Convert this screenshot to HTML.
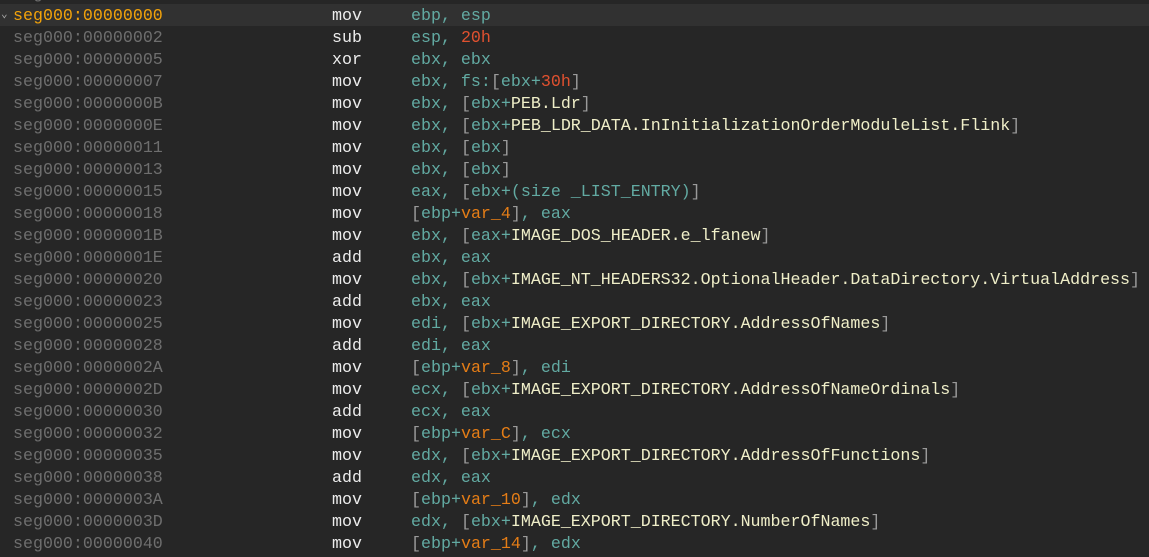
<!DOCTYPE html><html><head><style>
body{margin:0;width:1149px;height:557px;background:#262626;overflow:hidden;font-family:"Liberation Mono",monospace;font-size:16.65px}
.r{position:absolute;left:0;width:1149px;height:22px;line-height:23px;white-space:pre}
.a{position:absolute;left:13px;color:#6e6e6e}
.m{position:absolute;left:332px;color:#ececec}
.o{position:absolute;left:411px;color:#62aaa2}
.b{color:#9a9a9a}.n{color:#e0512f}.v{color:#e57d16}.i{color:#efeec8}.p{color:#cfcfcf}
</style></head><body>
<div class="r" style="top:-18px"><span class="a">seg000:00000000</span></div>
<div class="r" style="top:4px;background:#313131"><span style="position:absolute;left:1px;color:#aaa;font-size:11px">&#x2304;</span><span class="a" style="color:#f2a20a">seg000:00000000</span><span class="m">mov</span><span class="o">ebp, esp</span></div>
<div class="r" style="top:26px"><span class="a">seg000:00000002</span><span class="m">sub</span><span class="o">esp, <span class="n">20h</span></span></div>
<div class="r" style="top:48px"><span class="a">seg000:00000005</span><span class="m">xor</span><span class="o">ebx, ebx</span></div>
<div class="r" style="top:70px"><span class="a">seg000:00000007</span><span class="m">mov</span><span class="o">ebx, fs:<span class="b">[</span>ebx+<span class="n">30h</span><span class="b">]</span></span></div>
<div class="r" style="top:92px"><span class="a">seg000:0000000B</span><span class="m">mov</span><span class="o">ebx, <span class="b">[</span>ebx+<span class="i">PEB.Ldr</span><span class="b">]</span></span></div>
<div class="r" style="top:114px"><span class="a">seg000:0000000E</span><span class="m">mov</span><span class="o">ebx, <span class="b">[</span>ebx+<span class="i">PEB_LDR_DATA.InInitializationOrderModuleList.Flink</span><span class="b">]</span></span></div>
<div class="r" style="top:136px"><span class="a">seg000:00000011</span><span class="m">mov</span><span class="o">ebx, <span class="b">[</span>ebx<span class="b">]</span></span></div>
<div class="r" style="top:158px"><span class="a">seg000:00000013</span><span class="m">mov</span><span class="o">ebx, <span class="b">[</span>ebx<span class="b">]</span></span></div>
<div class="r" style="top:180px"><span class="a">seg000:00000015</span><span class="m">mov</span><span class="o">eax, <span class="b">[</span>ebx+(size _LIST_ENTRY)<span class="b">]</span></span></div>
<div class="r" style="top:202px"><span class="a">seg000:00000018</span><span class="m">mov</span><span class="o"><span class="b">[</span>ebp+<span class="v">var_4</span><span class="b">]</span>, eax</span></div>
<div class="r" style="top:224px"><span class="a">seg000:0000001B</span><span class="m">mov</span><span class="o">ebx, <span class="b">[</span>eax+<span class="i">IMAGE_DOS_HEADER.e_lfanew</span><span class="b">]</span></span></div>
<div class="r" style="top:246px"><span class="a">seg000:0000001E</span><span class="m">add</span><span class="o">ebx, eax</span></div>
<div class="r" style="top:268px"><span class="a">seg000:00000020</span><span class="m">mov</span><span class="o">ebx, <span class="b">[</span>ebx+<span class="i">IMAGE_NT_HEADERS32.OptionalHeader.DataDirectory.VirtualAddress</span><span class="b">]</span></span></div>
<div class="r" style="top:290px"><span class="a">seg000:00000023</span><span class="m">add</span><span class="o">ebx, eax</span></div>
<div class="r" style="top:312px"><span class="a">seg000:00000025</span><span class="m">mov</span><span class="o">edi, <span class="b">[</span>ebx+<span class="i">IMAGE_EXPORT_DIRECTORY.AddressOfNames</span><span class="b">]</span></span></div>
<div class="r" style="top:334px"><span class="a">seg000:00000028</span><span class="m">add</span><span class="o">edi, eax</span></div>
<div class="r" style="top:356px"><span class="a">seg000:0000002A</span><span class="m">mov</span><span class="o"><span class="b">[</span>ebp+<span class="v">var_8</span><span class="b">]</span>, edi</span></div>
<div class="r" style="top:378px"><span class="a">seg000:0000002D</span><span class="m">mov</span><span class="o">ecx, <span class="b">[</span>ebx+<span class="i">IMAGE_EXPORT_DIRECTORY.AddressOfNameOrdinals</span><span class="b">]</span></span></div>
<div class="r" style="top:400px"><span class="a">seg000:00000030</span><span class="m">add</span><span class="o">ecx, eax</span></div>
<div class="r" style="top:422px"><span class="a">seg000:00000032</span><span class="m">mov</span><span class="o"><span class="b">[</span>ebp+<span class="v">var_C</span><span class="b">]</span>, ecx</span></div>
<div class="r" style="top:444px"><span class="a">seg000:00000035</span><span class="m">mov</span><span class="o">edx, <span class="b">[</span>ebx+<span class="i">IMAGE_EXPORT_DIRECTORY.AddressOfFunctions</span><span class="b">]</span></span></div>
<div class="r" style="top:466px"><span class="a">seg000:00000038</span><span class="m">add</span><span class="o">edx, eax</span></div>
<div class="r" style="top:488px"><span class="a">seg000:0000003A</span><span class="m">mov</span><span class="o"><span class="b">[</span>ebp+<span class="v">var_10</span><span class="b">]</span>, edx</span></div>
<div class="r" style="top:510px"><span class="a">seg000:0000003D</span><span class="m">mov</span><span class="o">edx, <span class="b">[</span>ebx+<span class="i">IMAGE_EXPORT_DIRECTORY.NumberOfNames</span><span class="b">]</span></span></div>
<div class="r" style="top:532px"><span class="a">seg000:00000040</span><span class="m">mov</span><span class="o"><span class="b">[</span>ebp+<span class="v">var_14</span><span class="b">]</span>, edx</span></div>
</body></html>
